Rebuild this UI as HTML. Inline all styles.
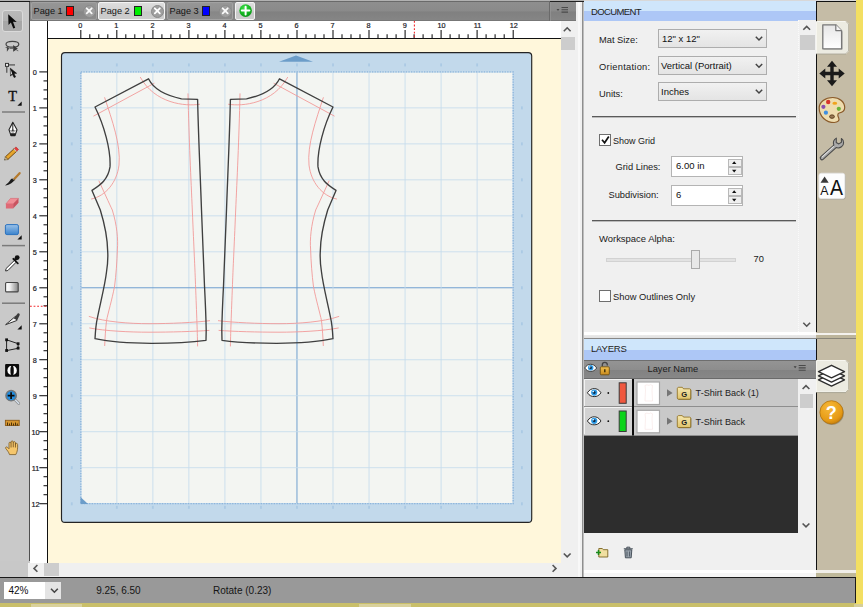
<!DOCTYPE html>
<html><head><meta charset="utf-8">
<style>
*{box-sizing:border-box;margin:0;padding:0}
html,body{width:863px;height:607px;overflow:hidden;background:#c8c8c8;font-family:"Liberation Sans",sans-serif;font-size:9px;color:#000}
.a{position:absolute}
#tool{left:0;top:2px;width:30px;height:559px;background:#c9c9c9;border-right:1px solid #505050}
#tabbar{left:30px;top:1px;width:546px;height:20px;background:linear-gradient(#8f8f8f,#8a8a8a 50%,#808080 55%,#858585);border-top:1px solid #6a6a6a;border-bottom:1px solid #777}
.tab{top:2px;height:18px;background:linear-gradient(#969696,#909090 50%,#878787 55%,#8c8c8c);border:1px solid #a2a2a2;border-radius:2px;font-size:9.2px;color:#151515;line-height:16.5px;padding-left:1.6px;white-space:nowrap}
.tab.act{background:linear-gradient(#dedede,#d2d2d2 50%,#c8c8c8 55%,#cdcdcd);border-color:#f4f4f4}
.sw{position:absolute;top:3px;width:8px;height:10px;border:1px solid #222}
.cl{position:absolute;top:2px;width:13px;height:13px;border-radius:50%;background:#9f9f9f;border:1px solid #8a8a8a}
#hr{left:30px;top:21px;width:531px;height:18px;background:#fff;border-bottom:1px solid #111}
#vr{left:30px;top:21px;width:18px;height:542px;background:#fff;border-right:1px solid #111}
#corner{left:30px;top:21px;width:17px;height:17px;background:#fff}
#canvas{left:48px;top:39px;width:513px;height:524px;background:#fff7db;overflow:hidden}
#vs{left:561px;top:21px;width:15px;height:542px;background:#f0f0f0}
#hs{left:28px;top:563px;width:533px;height:14px;background:#f0f0f0}
#sc{left:561px;top:563px;width:15px;height:14px;background:#f0f0f0}
.thumb{background:#cdcdcd}
#gap{left:576px;top:2px;width:8px;height:575px;background:linear-gradient(90deg,#f0f0f0 0,#f0f0f0 2px,#f8f8f8 2px,#f8f8f8 4px,#f0f0f0 4px,#f0f0f0 6px,#8e8e8e 6px,#8e8e8e 7.5px,#bdbdbd 7.5px)}
#status{left:0;top:577px;width:856px;height:26px;background:#999;border-top:1px solid #1a1a1a;border-right:1px solid #1a1a1a}
#bottom{left:0;top:603px;width:863px;height:4px;background:#c9bf6a}
#rp{left:584px;top:0;width:232px;height:577px;background:#f0f0f0}
.hdr{left:0;width:232px;height:20px;background:linear-gradient(#cfe6fb 50%,#adc7f6 50%);font-size:9.5px;line-height:21px;padding-left:7px;color:#222}
#strip{left:816px;top:2px;width:40px;height:575px;background:#c5bca6;border-left:1px solid #111}
#yellow{left:856px;top:0;width:7px;height:607px;background:#f3df62}
svg{position:absolute;left:0;top:0;overflow:visible}
svg text{font-family:"Liberation Sans",sans-serif}
</style></head><body>
<div class="a" id="tool"></div>
<div class="a" style="left:2px;top:10px;width:21px;height:22px;border:1px solid #dadada;border-radius:3px;background:linear-gradient(#b9b9b9,#b2b2b2 50%,#a6a6a6 52%,#a9a9a9)"></div>

<svg width="863" height="607" viewBox="0 0 863 607">
 <defs>
  <linearGradient id="rb" x1="0" y1="0" x2="0" y2="1"><stop offset="0" stop-color="#9cc2e8"/><stop offset="1" stop-color="#3a83cd"/></linearGradient>
  <linearGradient id="gr" x1="0" y1="0" x2="1" y2="0"><stop offset="0" stop-color="#ffffff"/><stop offset=".35" stop-color="#f0f0f0"/><stop offset="1" stop-color="#858585"/></linearGradient>
  <radialGradient id="zb" cx=".5" cy=".5" r=".6"><stop offset="0" stop-color="#2e9ff0"/><stop offset="1" stop-color="#1a7fd0"/></radialGradient>
 </defs>
 <!-- arrow -->
 <path d="M8.2 14.3 L8.5 25 L10.9 22.4 L13.3 28.6 L15.2 27.7 L13 21.8 L16.7 21.9 Z" fill="#0b0b0b"/>
 <!-- lasso -->
 <ellipse cx="12.4" cy="44.3" rx="6.4" ry="2.9" fill="none" stroke="#444" stroke-width="1.2"/>
 <path d="M6.9 46.2v5.6l2.3-3.3z" fill="#444"/>
 <path d="M13.2 45v6.8l4.6-3z" fill="#3a3a3a"/>
 <path d="M5.6 47.5h3M9.5 48.5h4M16.5 50.3l1.8 .5" stroke="#555" stroke-width=".8" fill="none"/>
 <!-- node select -->
 <rect x="5.5" y="63.4" width="3" height="3" fill="#e8e8e8" stroke="#333" stroke-width="1"/>
 <path d="M9 64.9h6" stroke="#666" stroke-width="1.5" fill="none"/>
 <path d="M6.8 67v5.8" stroke="#444" stroke-width="1.1" fill="none"/>
 <path d="M10.3 68.2l0.2 7.8 1.9-1.7 1.8 3.3 1.4-.7-1.7-3.3 2.7-.3z" fill="#111" stroke="#111" stroke-width=".6"/>
 <path d="M10.6 69.5l0.1 5.5 1.5-1.5z" fill="#ddd"/>
 <text x="12.65" y="100.6" font-size="14.3" text-anchor="middle" fill="#111" stroke="#111" stroke-width=".35" style="font-family:'Liberation Serif',serif">T</text>
 <!-- T triangle -->
 <path d="M21.7 101.5v4.3h-4.3z" fill="#111"/>
 <path d="M2 112h23" stroke="#7b7b7b" stroke-width="1.5"/>
 <!-- pen nib -->
 <path d="M12.8 122.3l-3.8 7.5 2 5.8h4l2-5.8z" fill="#fff" stroke="#222" stroke-width="1.1" stroke-linejoin="round"/>
 <path d="M10.6 133.2h4.6v2.6h-4.6z" fill="#222"/>
 <path d="M12.8 123v6.5" stroke="#222" stroke-width="1"/>
 <circle cx="12.8" cy="130.2" r="1" fill="#222"/>
 <path d="M9.6 130l2.2 2.8h2l2.2-2.8" fill="#555" opacity=".5"/>
 <!-- pencil -->
 <g transform="rotate(-43 12 153)">
  <rect x="4.5" y="151.3" width="12" height="3.6" fill="#e6a52c" stroke="#6e4510" stroke-width=".9"/>
  <path d="M4.5 151.3l-2.8 1.8 2.8 1.8z" fill="#e8cfa0" stroke="#5a4a2a" stroke-width=".5"/>
  <path d="M2.6 152.6l-1 .5 1 .5z" fill="#222"/>
  <rect x="16.5" y="151.3" width="2.6" height="3.6" fill="#e83a3a" stroke="#a22" stroke-width=".5"/>
  <rect x="15.7" y="151.3" width="1" height="3.6" fill="#ccc"/>
 </g>
 <!-- brush -->
 <path d="M19.6 173.2l-6 6.6" stroke="#b47a2e" stroke-width="2.3" stroke-linecap="round"/>
 <path d="M14.6 179.2c-1 3-4.5 5.5-9.6 6.3c2.5-1.8 4-3.5 6.2-6.7z" fill="#1b1b1b"/>
 <path d="M12.3 178.5l2.8 2.2" stroke="#777" stroke-width="1"/>
 <!-- eraser -->
 <path d="M10.5 198.4h8l-5.3 5.5h-7.3z" fill="#f08e96" stroke="#d9606c" stroke-width=".6"/>
 <path d="M5.9 203.9h7.3v4.6h-7.3z" fill="#de6a76"/>
 <path d="M13.2 203.9l5.3-5.5v4.3l-5.3 5.8z" fill="#c9525f"/>
 <!-- rect -->
 <rect x="5.4" y="224.6" width="13" height="10" rx="1.5" fill="url(#rb)" stroke="#2b72bf" stroke-width="1"/>
 <path d="M21.7 235.3v4.3h-4.3z" fill="#111"/>
 <path d="M2 245.6h23" stroke="#7b7b7b" stroke-width="1.5"/>
 <!-- eyedropper -->
 <path d="M6 268.6l8.4-8.2 1.8 1.8-8.3 8.3-2.3.5z" fill="#fff" stroke="#333" stroke-width="1"/>
 <path d="M13.3 258.8l4.5 4.5" stroke="#111" stroke-width="1.8" stroke-linecap="round"/>
 <circle cx="17.2" cy="257.6" r="2.4" fill="#111"/>
 <path d="M14.8 260l2.4-2.4" stroke="#111" stroke-width="2.6"/>
 <!-- gradient -->
 <rect x="5.6" y="282.5" width="12.6" height="9.4" rx="1" fill="url(#gr)" stroke="#444" stroke-width="1.1"/>
 <path d="M2 303.2h23" stroke="#7b7b7b" stroke-width="1.5"/>
 <!-- knife -->
 <path d="M5.6 324.7l10-8.5 1.2 4.3z" fill="#f4f4f4" stroke="#333" stroke-width="1" stroke-linejoin="round"/>
 <path d="M13.8 318.5l3.7-4.8c1-.9 2.5 0 2.2 1.3l-2.5 5.2z" fill="#3a3a3a"/>
 <path d="M21.7 325.3v4.3h-4.3z" fill="#111"/>
 <!-- distort -->
 <path d="M6.6 339.8l11.5 3.9v4.6l-11.5 2.3z" fill="none" stroke="#222" stroke-width="1"/>
 <g fill="#111"><rect x="5.2" y="338.4" width="2.8" height="2.8"/><rect x="16.7" y="342.3" width="2.8" height="2.8"/><rect x="16.7" y="346.8" width="2.8" height="2.8"/><rect x="5.2" y="349.1" width="2.8" height="2.8"/></g>
 <!-- bw -->
 <rect x="5.1" y="364" width="14" height="12.8" rx="1" fill="#0c0c0c"/>
 <ellipse cx="12.1" cy="370.4" rx="4.7" ry="4.9" fill="#fff"/>
 <ellipse cx="12.1" cy="370.4" rx="1.7" ry="5" fill="#0c0c0c"/>
 <path d="M10 364.5h4.2v1.6h-4.2zM10 374.7h4.2v1.6h-4.2z" fill="#0c0c0c"/>
 <!-- zoom -->
 <g transform="translate(-.5 0)">
 <path d="M15.3 399.5l4 4" stroke="#8a8a8a" stroke-width="2.6" stroke-linecap="round"/>
 <path d="M15.3 399.5l4 4" stroke="#d8e4f0" stroke-width="1.2" stroke-linecap="round"/>
 <circle cx="11.6" cy="395.7" r="5.2" fill="url(#zb)" stroke="#777" stroke-width="1.4"/>
 <path d="M11.6 392.3v6.8M8.2 395.7h6.8" stroke="#0a0a0a" stroke-width="1.7"/>
 </g>
 <!-- ruler -->
 <rect x="5.4" y="420.3" width="13.8" height="5.2" fill="#d5952f" stroke="#8c5a17" stroke-width=".9"/>
 <path d="M7.5 422.5v3M9.5 423.5v2M11.5 422.5v3M13.5 423.5v2M15.5 422.5v3M17.3 423.5v2" stroke="#3a2505" stroke-width=".9"/>
 <!-- hand -->
 <path d="M9.5 454.6C8.8 452 7 450.2 5.8 448.6C5 447.4 6.3 446.3 7.5 447.3L9 448.8L9 443.3C9 441.8 11 441.8 11 443.3L11.1 442C11.1 440.5 13.2 440.5 13.2 442L13.3 442.6C13.3 441.2 15.4 441.2 15.4 442.7L15.5 444.3C15.6 443 17.6 443 17.6 444.5C17.8 448 17.6 451.5 15.8 454.6Z" fill="#f5c66c" stroke="#7a5a24" stroke-width=".8" stroke-linejoin="round"/>
 <path d="M11.050 443.3V447.5M13.250 442.5V447.3M15.450 443.3V447.5" stroke="#6a4a1a" stroke-width=".8" fill="none"/>
</svg>
<div class="a" id="tabbar"></div>
<div class="a tab" style="left:31px;width:66px">Page 1<span class="sw" style="left:34px;background:#f00"></span><span class="cl" style="left:51px"></span></div>
<div class="a tab act" style="left:98px;width:67px">Page 2<span class="sw" style="left:35px;background:#0e0"></span><span class="cl" style="left:52px"></span></div>
<div class="a tab" style="left:167px;width:66px">Page 3<span class="sw" style="left:34px;background:#00f"></span><span class="cl" style="left:51px"></span></div>
<div class="a tab act" style="left:235px;width:20px"></div>
<svg width="863" height="607" viewBox="0 0 863 607">
 <g stroke="#fff" stroke-width="1.8" stroke-linecap="round">
  <path d="M86.7 8.3l5 5m0-5l-5 5" opacity=".95"/>
  <path d="M154.8 8.3l5 5m0-5l-5 5"/>
  <path d="M222.7 8.3l5 5m0-5l-5 5" opacity=".95"/>
 </g>
 <defs><radialGradient id="gg" cx=".4" cy=".3" r=".8"><stop offset="0" stop-color="#3fe04a"/><stop offset=".6" stop-color="#12b31f"/><stop offset="1" stop-color="#0a8a15"/></radialGradient></defs>
 <circle cx="245.6" cy="10.6" r="6.3" fill="url(#gg)"/>
 <path d="M245.6 6.8v7.6M241.8 10.6h7.6" stroke="#fff" stroke-width="2" stroke-linecap="round"/>
 <!-- menu button -->
 <line x1="549.5" y1="1" x2="549.5" y2="21" stroke="#6a6a6a"/>
 <line x1="550.5" y1="1" x2="550.5" y2="21" stroke="#999" opacity=".6"/>
 <path d="M556.5 9h3l-1.5 2z" fill="#4a4a4a"/>
 <path d="M561.5 7.5h6.5M561.5 9.8h6.5M561.5 12.1h6.5" stroke="#4a4a4a" stroke-width="1.1"/>
 <line x1="550" y1="1.5" x2="584" y2="1.5" stroke="#222" stroke-width="1"/>
</svg>
<div class="a" id="hr"></div><div class="a" id="vr"></div><div class="a" id="corner"></div>
<svg width="863" height="607" viewBox="0 0 863 607">
<line x1="80.8" y1="30" x2="80.8" y2="38" stroke="#1a1a1a" stroke-width="1.1"/>
<text x="80.4" y="28.2" font-size="7.3" text-anchor="middle" fill="#1c1c28" stroke="#1c1c28" stroke-width=".2">0</text>
<line x1="89.8" y1="34.3" x2="89.8" y2="38" stroke="#1a1a1a" stroke-width="1.1"/>
<line x1="98.8" y1="34.3" x2="98.8" y2="38" stroke="#1a1a1a" stroke-width="1.1"/>
<line x1="107.8" y1="34.3" x2="107.8" y2="38" stroke="#1a1a1a" stroke-width="1.1"/>
<line x1="116.8" y1="30" x2="116.8" y2="38" stroke="#1a1a1a" stroke-width="1.1"/>
<text x="116.4" y="28.2" font-size="7.3" text-anchor="middle" fill="#1c1c28" stroke="#1c1c28" stroke-width=".2">1</text>
<line x1="125.8" y1="34.3" x2="125.8" y2="38" stroke="#1a1a1a" stroke-width="1.1"/>
<line x1="134.8" y1="34.3" x2="134.8" y2="38" stroke="#1a1a1a" stroke-width="1.1"/>
<line x1="143.9" y1="34.3" x2="143.9" y2="38" stroke="#1a1a1a" stroke-width="1.1"/>
<line x1="152.9" y1="30" x2="152.9" y2="38" stroke="#1a1a1a" stroke-width="1.1"/>
<text x="152.5" y="28.2" font-size="7.3" text-anchor="middle" fill="#1c1c28" stroke="#1c1c28" stroke-width=".2">2</text>
<line x1="161.9" y1="34.3" x2="161.9" y2="38" stroke="#1a1a1a" stroke-width="1.1"/>
<line x1="170.9" y1="34.3" x2="170.9" y2="38" stroke="#1a1a1a" stroke-width="1.1"/>
<line x1="179.9" y1="34.3" x2="179.9" y2="38" stroke="#1a1a1a" stroke-width="1.1"/>
<line x1="188.9" y1="30" x2="188.9" y2="38" stroke="#1a1a1a" stroke-width="1.1"/>
<text x="188.5" y="28.2" font-size="7.3" text-anchor="middle" fill="#1c1c28" stroke="#1c1c28" stroke-width=".2">3</text>
<line x1="197.9" y1="34.3" x2="197.9" y2="38" stroke="#1a1a1a" stroke-width="1.1"/>
<line x1="206.9" y1="34.3" x2="206.9" y2="38" stroke="#1a1a1a" stroke-width="1.1"/>
<line x1="215.9" y1="34.3" x2="215.9" y2="38" stroke="#1a1a1a" stroke-width="1.1"/>
<line x1="224.9" y1="30" x2="224.9" y2="38" stroke="#1a1a1a" stroke-width="1.1"/>
<text x="224.5" y="28.2" font-size="7.3" text-anchor="middle" fill="#1c1c28" stroke="#1c1c28" stroke-width=".2">4</text>
<line x1="233.9" y1="34.3" x2="233.9" y2="38" stroke="#1a1a1a" stroke-width="1.1"/>
<line x1="242.9" y1="34.3" x2="242.9" y2="38" stroke="#1a1a1a" stroke-width="1.1"/>
<line x1="251.9" y1="34.3" x2="251.9" y2="38" stroke="#1a1a1a" stroke-width="1.1"/>
<line x1="260.9" y1="30" x2="260.9" y2="38" stroke="#1a1a1a" stroke-width="1.1"/>
<text x="260.6" y="28.2" font-size="7.3" text-anchor="middle" fill="#1c1c28" stroke="#1c1c28" stroke-width=".2">5</text>
<line x1="270.0" y1="34.3" x2="270.0" y2="38" stroke="#1a1a1a" stroke-width="1.1"/>
<line x1="279.0" y1="34.3" x2="279.0" y2="38" stroke="#1a1a1a" stroke-width="1.1"/>
<line x1="288.0" y1="34.3" x2="288.0" y2="38" stroke="#1a1a1a" stroke-width="1.1"/>
<line x1="297.0" y1="30" x2="297.0" y2="38" stroke="#1a1a1a" stroke-width="1.1"/>
<text x="296.6" y="28.2" font-size="7.3" text-anchor="middle" fill="#1c1c28" stroke="#1c1c28" stroke-width=".2">6</text>
<line x1="306.0" y1="34.3" x2="306.0" y2="38" stroke="#1a1a1a" stroke-width="1.1"/>
<line x1="315.0" y1="34.3" x2="315.0" y2="38" stroke="#1a1a1a" stroke-width="1.1"/>
<line x1="324.0" y1="34.3" x2="324.0" y2="38" stroke="#1a1a1a" stroke-width="1.1"/>
<line x1="333.0" y1="30" x2="333.0" y2="38" stroke="#1a1a1a" stroke-width="1.1"/>
<text x="332.6" y="28.2" font-size="7.3" text-anchor="middle" fill="#1c1c28" stroke="#1c1c28" stroke-width=".2">7</text>
<line x1="342.0" y1="34.3" x2="342.0" y2="38" stroke="#1a1a1a" stroke-width="1.1"/>
<line x1="351.0" y1="34.3" x2="351.0" y2="38" stroke="#1a1a1a" stroke-width="1.1"/>
<line x1="360.0" y1="34.3" x2="360.0" y2="38" stroke="#1a1a1a" stroke-width="1.1"/>
<line x1="369.0" y1="30" x2="369.0" y2="38" stroke="#1a1a1a" stroke-width="1.1"/>
<text x="368.6" y="28.2" font-size="7.3" text-anchor="middle" fill="#1c1c28" stroke="#1c1c28" stroke-width=".2">8</text>
<line x1="378.0" y1="34.3" x2="378.0" y2="38" stroke="#1a1a1a" stroke-width="1.1"/>
<line x1="387.1" y1="34.3" x2="387.1" y2="38" stroke="#1a1a1a" stroke-width="1.1"/>
<line x1="396.1" y1="34.3" x2="396.1" y2="38" stroke="#1a1a1a" stroke-width="1.1"/>
<line x1="405.1" y1="30" x2="405.1" y2="38" stroke="#1a1a1a" stroke-width="1.1"/>
<text x="404.7" y="28.2" font-size="7.3" text-anchor="middle" fill="#1c1c28" stroke="#1c1c28" stroke-width=".2">9</text>
<line x1="414.1" y1="34.3" x2="414.1" y2="38" stroke="#1a1a1a" stroke-width="1.1"/>
<line x1="423.1" y1="34.3" x2="423.1" y2="38" stroke="#1a1a1a" stroke-width="1.1"/>
<line x1="432.1" y1="34.3" x2="432.1" y2="38" stroke="#1a1a1a" stroke-width="1.1"/>
<line x1="441.1" y1="30" x2="441.1" y2="38" stroke="#1a1a1a" stroke-width="1.1"/>
<text x="441.6" y="28.2" font-size="7.3" text-anchor="middle" fill="#1c1c28" stroke="#1c1c28" stroke-width=".2">10</text>
<line x1="450.1" y1="34.3" x2="450.1" y2="38" stroke="#1a1a1a" stroke-width="1.1"/>
<line x1="459.1" y1="34.3" x2="459.1" y2="38" stroke="#1a1a1a" stroke-width="1.1"/>
<line x1="468.1" y1="34.3" x2="468.1" y2="38" stroke="#1a1a1a" stroke-width="1.1"/>
<line x1="477.1" y1="30" x2="477.1" y2="38" stroke="#1a1a1a" stroke-width="1.1"/>
<text x="477.6" y="28.2" font-size="7.3" text-anchor="middle" fill="#1c1c28" stroke="#1c1c28" stroke-width=".2">11</text>
<line x1="486.1" y1="34.3" x2="486.1" y2="38" stroke="#1a1a1a" stroke-width="1.1"/>
<line x1="495.1" y1="34.3" x2="495.1" y2="38" stroke="#1a1a1a" stroke-width="1.1"/>
<line x1="504.2" y1="34.3" x2="504.2" y2="38" stroke="#1a1a1a" stroke-width="1.1"/>
<line x1="513.2" y1="30" x2="513.2" y2="38" stroke="#1a1a1a" stroke-width="1.1"/>
<text x="513.7" y="28.2" font-size="7.3" text-anchor="middle" fill="#1c1c28" stroke="#1c1c28" stroke-width=".2">12</text>
<line x1="39.3" y1="71.9" x2="47" y2="71.9" stroke="#1a1a1a" stroke-width="1.1"/>
<text x="34.9" y="74.8" font-size="7.3" text-anchor="middle" fill="#1c1c28" stroke="#1c1c28" stroke-width=".2">0</text>
<line x1="43.5" y1="80.9" x2="47" y2="80.9" stroke="#1a1a1a" stroke-width="1.1"/>
<line x1="43.5" y1="89.9" x2="47" y2="89.9" stroke="#1a1a1a" stroke-width="1.1"/>
<line x1="43.5" y1="98.9" x2="47" y2="98.9" stroke="#1a1a1a" stroke-width="1.1"/>
<line x1="39.3" y1="107.9" x2="47" y2="107.9" stroke="#1a1a1a" stroke-width="1.1"/>
<text x="34.9" y="110.8" font-size="7.3" text-anchor="middle" fill="#1c1c28" stroke="#1c1c28" stroke-width=".2">1</text>
<line x1="43.5" y1="116.9" x2="47" y2="116.9" stroke="#1a1a1a" stroke-width="1.1"/>
<line x1="43.5" y1="125.9" x2="47" y2="125.9" stroke="#1a1a1a" stroke-width="1.1"/>
<line x1="43.5" y1="134.9" x2="47" y2="134.9" stroke="#1a1a1a" stroke-width="1.1"/>
<line x1="39.3" y1="143.9" x2="47" y2="143.9" stroke="#1a1a1a" stroke-width="1.1"/>
<text x="34.9" y="146.8" font-size="7.3" text-anchor="middle" fill="#1c1c28" stroke="#1c1c28" stroke-width=".2">2</text>
<line x1="43.5" y1="152.9" x2="47" y2="152.9" stroke="#1a1a1a" stroke-width="1.1"/>
<line x1="43.5" y1="161.8" x2="47" y2="161.8" stroke="#1a1a1a" stroke-width="1.1"/>
<line x1="43.5" y1="170.8" x2="47" y2="170.8" stroke="#1a1a1a" stroke-width="1.1"/>
<line x1="39.3" y1="179.8" x2="47" y2="179.8" stroke="#1a1a1a" stroke-width="1.1"/>
<text x="34.9" y="182.7" font-size="7.3" text-anchor="middle" fill="#1c1c28" stroke="#1c1c28" stroke-width=".2">3</text>
<line x1="43.5" y1="188.8" x2="47" y2="188.8" stroke="#1a1a1a" stroke-width="1.1"/>
<line x1="43.5" y1="197.8" x2="47" y2="197.8" stroke="#1a1a1a" stroke-width="1.1"/>
<line x1="43.5" y1="206.8" x2="47" y2="206.8" stroke="#1a1a1a" stroke-width="1.1"/>
<line x1="39.3" y1="215.8" x2="47" y2="215.8" stroke="#1a1a1a" stroke-width="1.1"/>
<text x="34.9" y="218.7" font-size="7.3" text-anchor="middle" fill="#1c1c28" stroke="#1c1c28" stroke-width=".2">4</text>
<line x1="43.5" y1="224.8" x2="47" y2="224.8" stroke="#1a1a1a" stroke-width="1.1"/>
<line x1="43.5" y1="233.8" x2="47" y2="233.8" stroke="#1a1a1a" stroke-width="1.1"/>
<line x1="43.5" y1="242.8" x2="47" y2="242.8" stroke="#1a1a1a" stroke-width="1.1"/>
<line x1="39.3" y1="251.8" x2="47" y2="251.8" stroke="#1a1a1a" stroke-width="1.1"/>
<text x="34.9" y="254.7" font-size="7.3" text-anchor="middle" fill="#1c1c28" stroke="#1c1c28" stroke-width=".2">5</text>
<line x1="43.5" y1="260.8" x2="47" y2="260.8" stroke="#1a1a1a" stroke-width="1.1"/>
<line x1="43.5" y1="269.8" x2="47" y2="269.8" stroke="#1a1a1a" stroke-width="1.1"/>
<line x1="43.5" y1="278.8" x2="47" y2="278.8" stroke="#1a1a1a" stroke-width="1.1"/>
<line x1="39.3" y1="287.8" x2="47" y2="287.8" stroke="#1a1a1a" stroke-width="1.1"/>
<text x="34.9" y="290.7" font-size="7.3" text-anchor="middle" fill="#1c1c28" stroke="#1c1c28" stroke-width=".2">6</text>
<line x1="43.5" y1="296.8" x2="47" y2="296.8" stroke="#1a1a1a" stroke-width="1.1"/>
<line x1="43.5" y1="305.8" x2="47" y2="305.8" stroke="#1a1a1a" stroke-width="1.1"/>
<line x1="43.5" y1="314.8" x2="47" y2="314.8" stroke="#1a1a1a" stroke-width="1.1"/>
<line x1="39.3" y1="323.8" x2="47" y2="323.8" stroke="#1a1a1a" stroke-width="1.1"/>
<text x="34.9" y="326.7" font-size="7.3" text-anchor="middle" fill="#1c1c28" stroke="#1c1c28" stroke-width=".2">7</text>
<line x1="43.5" y1="332.8" x2="47" y2="332.8" stroke="#1a1a1a" stroke-width="1.1"/>
<line x1="43.5" y1="341.8" x2="47" y2="341.8" stroke="#1a1a1a" stroke-width="1.1"/>
<line x1="43.5" y1="350.7" x2="47" y2="350.7" stroke="#1a1a1a" stroke-width="1.1"/>
<line x1="39.3" y1="359.7" x2="47" y2="359.7" stroke="#1a1a1a" stroke-width="1.1"/>
<text x="34.9" y="362.6" font-size="7.3" text-anchor="middle" fill="#1c1c28" stroke="#1c1c28" stroke-width=".2">8</text>
<line x1="43.5" y1="368.7" x2="47" y2="368.7" stroke="#1a1a1a" stroke-width="1.1"/>
<line x1="43.5" y1="377.7" x2="47" y2="377.7" stroke="#1a1a1a" stroke-width="1.1"/>
<line x1="43.5" y1="386.7" x2="47" y2="386.7" stroke="#1a1a1a" stroke-width="1.1"/>
<line x1="39.3" y1="395.7" x2="47" y2="395.7" stroke="#1a1a1a" stroke-width="1.1"/>
<text x="34.9" y="398.6" font-size="7.3" text-anchor="middle" fill="#1c1c28" stroke="#1c1c28" stroke-width=".2">9</text>
<line x1="43.5" y1="404.7" x2="47" y2="404.7" stroke="#1a1a1a" stroke-width="1.1"/>
<line x1="43.5" y1="413.7" x2="47" y2="413.7" stroke="#1a1a1a" stroke-width="1.1"/>
<line x1="43.5" y1="422.7" x2="47" y2="422.7" stroke="#1a1a1a" stroke-width="1.1"/>
<line x1="39.3" y1="431.7" x2="47" y2="431.7" stroke="#1a1a1a" stroke-width="1.1"/>
<text x="35.6" y="434.6" font-size="7.3" text-anchor="middle" fill="#1c1c28" stroke="#1c1c28" stroke-width=".2">10</text>
<line x1="43.5" y1="440.7" x2="47" y2="440.7" stroke="#1a1a1a" stroke-width="1.1"/>
<line x1="43.5" y1="449.7" x2="47" y2="449.7" stroke="#1a1a1a" stroke-width="1.1"/>
<line x1="43.5" y1="458.7" x2="47" y2="458.7" stroke="#1a1a1a" stroke-width="1.1"/>
<line x1="39.3" y1="467.7" x2="47" y2="467.7" stroke="#1a1a1a" stroke-width="1.1"/>
<text x="35.6" y="470.6" font-size="7.3" text-anchor="middle" fill="#1c1c28" stroke="#1c1c28" stroke-width=".2">11</text>
<line x1="43.5" y1="476.7" x2="47" y2="476.7" stroke="#1a1a1a" stroke-width="1.1"/>
<line x1="43.5" y1="485.7" x2="47" y2="485.7" stroke="#1a1a1a" stroke-width="1.1"/>
<line x1="43.5" y1="494.7" x2="47" y2="494.7" stroke="#1a1a1a" stroke-width="1.1"/>
<line x1="39.3" y1="503.7" x2="47" y2="503.7" stroke="#1a1a1a" stroke-width="1.1"/>
<text x="35.6" y="506.6" font-size="7.3" text-anchor="middle" fill="#1c1c28" stroke="#1c1c28" stroke-width=".2">12</text>
<line x1="414.4" y1="21" x2="414.4" y2="38" stroke="#f2282c" stroke-width="1.1" stroke-dasharray="1.8 1.8"/>
<line x1="30" y1="306.2" x2="47" y2="306.2" stroke="#f2282c" stroke-width="1.1" stroke-dasharray="1.8 1.8"/>
</svg>
<div class="a" id="canvas"></div>
<svg width="863" height="607" viewBox="0 0 863 607" style="clip-path:inset(39px 302px 44px 48px)">
<rect x="61.5" y="52.6" width="470.2" height="469.8" rx="3.5" ry="3.5" fill="#c2d9eb" stroke="#242424" stroke-width="1.15"/>
<rect x="80.3" y="71.4" width="433.2" height="432.6" fill="#f3f5f2"/>
<line x1="116.83" y1="71.5" x2="116.83" y2="504" stroke="#c5dbec" stroke-width="0.85"/>
<line x1="80.5" y1="107.88" x2="513.4" y2="107.88" stroke="#c5dbec" stroke-width="0.85"/>
<line x1="152.86" y1="71.5" x2="152.86" y2="504" stroke="#c5dbec" stroke-width="0.85"/>
<line x1="80.5" y1="143.86" x2="513.4" y2="143.86" stroke="#c5dbec" stroke-width="0.85"/>
<line x1="188.89" y1="71.5" x2="188.89" y2="504" stroke="#c5dbec" stroke-width="0.85"/>
<line x1="80.5" y1="179.84" x2="513.4" y2="179.84" stroke="#c5dbec" stroke-width="0.85"/>
<line x1="224.92" y1="71.5" x2="224.92" y2="504" stroke="#c5dbec" stroke-width="0.85"/>
<line x1="80.5" y1="215.82" x2="513.4" y2="215.82" stroke="#c5dbec" stroke-width="0.85"/>
<line x1="260.95" y1="71.5" x2="260.95" y2="504" stroke="#c5dbec" stroke-width="0.85"/>
<line x1="80.5" y1="251.8" x2="513.4" y2="251.8" stroke="#c5dbec" stroke-width="0.85"/>
<line x1="296.98" y1="71.5" x2="296.98" y2="504" stroke="#6f9fcf" stroke-width="1.0"/>
<line x1="80.5" y1="287.78" x2="513.4" y2="287.78" stroke="#6f9fcf" stroke-width="1.0"/>
<line x1="333.01" y1="71.5" x2="333.01" y2="504" stroke="#c5dbec" stroke-width="0.85"/>
<line x1="80.5" y1="323.76" x2="513.4" y2="323.76" stroke="#c5dbec" stroke-width="0.85"/>
<line x1="369.04" y1="71.5" x2="369.04" y2="504" stroke="#c5dbec" stroke-width="0.85"/>
<line x1="80.5" y1="359.74" x2="513.4" y2="359.74" stroke="#c5dbec" stroke-width="0.85"/>
<line x1="405.07" y1="71.5" x2="405.07" y2="504" stroke="#c5dbec" stroke-width="0.85"/>
<line x1="80.5" y1="395.72" x2="513.4" y2="395.72" stroke="#c5dbec" stroke-width="0.85"/>
<line x1="441.1" y1="71.5" x2="441.1" y2="504" stroke="#c5dbec" stroke-width="0.85"/>
<line x1="80.5" y1="431.7" x2="513.4" y2="431.7" stroke="#c5dbec" stroke-width="0.85"/>
<line x1="477.13" y1="71.5" x2="477.13" y2="504" stroke="#c5dbec" stroke-width="0.85"/>
<line x1="80.5" y1="467.68" x2="513.4" y2="467.68" stroke="#c5dbec" stroke-width="0.85"/>
<rect x="80.8" y="71.9" width="432.4" height="431.8" fill="none" stroke="#b9d3ea" stroke-width="1.3"/>
<rect x="80.8" y="71.9" width="432.4" height="431.8" fill="none" stroke="#8db5db" stroke-width="1.3" stroke-dasharray="1.3 1.3"/>
<path d="M279 61.8 L296 55.5 L313 61.8 Z" fill="#6c9dc9"/>
<path d="M80.5 497 L80.5 504 L88 504 Z" fill="#6c9dc9"/>
<rect x="115.92999999999999" y="63.4" width="1.8" height="3" fill="#8db5db" opacity=".42"/>
<rect x="115.92999999999999" y="505.8" width="1.8" height="3" fill="#8db5db" opacity=".42"/>
<rect x="70.9" y="106.38" width="1.8" height="3" fill="#8db5db" opacity=".42"/>
<rect x="521" y="106.38" width="1.8" height="3" fill="#8db5db" opacity=".42"/>
<rect x="151.96" y="63.4" width="1.8" height="3" fill="#8db5db" opacity=".42"/>
<rect x="151.96" y="505.8" width="1.8" height="3" fill="#8db5db" opacity=".42"/>
<rect x="70.9" y="142.36" width="1.8" height="3" fill="#8db5db" opacity=".42"/>
<rect x="521" y="142.36" width="1.8" height="3" fill="#8db5db" opacity=".42"/>
<rect x="187.98999999999998" y="63.4" width="1.8" height="3" fill="#8db5db" opacity=".42"/>
<rect x="187.98999999999998" y="505.8" width="1.8" height="3" fill="#8db5db" opacity=".42"/>
<rect x="70.9" y="178.34" width="1.8" height="3" fill="#8db5db" opacity=".42"/>
<rect x="521" y="178.34" width="1.8" height="3" fill="#8db5db" opacity=".42"/>
<rect x="224.01999999999998" y="63.4" width="1.8" height="3" fill="#8db5db" opacity=".42"/>
<rect x="224.01999999999998" y="505.8" width="1.8" height="3" fill="#8db5db" opacity=".42"/>
<rect x="70.9" y="214.32" width="1.8" height="3" fill="#8db5db" opacity=".42"/>
<rect x="521" y="214.32" width="1.8" height="3" fill="#8db5db" opacity=".42"/>
<rect x="260.05" y="63.4" width="1.8" height="3" fill="#8db5db" opacity=".42"/>
<rect x="260.05" y="505.8" width="1.8" height="3" fill="#8db5db" opacity=".42"/>
<rect x="70.9" y="250.3" width="1.8" height="3" fill="#8db5db" opacity=".42"/>
<rect x="521" y="250.3" width="1.8" height="3" fill="#8db5db" opacity=".42"/>
<rect x="296.08000000000004" y="63.4" width="1.8" height="3" fill="#8db5db" opacity=".42"/>
<rect x="296.08000000000004" y="505.8" width="1.8" height="3" fill="#8db5db" opacity=".42"/>
<rect x="70.9" y="286.28" width="1.8" height="3" fill="#8db5db" opacity=".42"/>
<rect x="521" y="286.28" width="1.8" height="3" fill="#8db5db" opacity=".42"/>
<rect x="332.11" y="63.4" width="1.8" height="3" fill="#8db5db" opacity=".42"/>
<rect x="332.11" y="505.8" width="1.8" height="3" fill="#8db5db" opacity=".42"/>
<rect x="70.9" y="322.26" width="1.8" height="3" fill="#8db5db" opacity=".42"/>
<rect x="521" y="322.26" width="1.8" height="3" fill="#8db5db" opacity=".42"/>
<rect x="368.14000000000004" y="63.4" width="1.8" height="3" fill="#8db5db" opacity=".42"/>
<rect x="368.14000000000004" y="505.8" width="1.8" height="3" fill="#8db5db" opacity=".42"/>
<rect x="70.9" y="358.24" width="1.8" height="3" fill="#8db5db" opacity=".42"/>
<rect x="521" y="358.24" width="1.8" height="3" fill="#8db5db" opacity=".42"/>
<rect x="404.17" y="63.4" width="1.8" height="3" fill="#8db5db" opacity=".42"/>
<rect x="404.17" y="505.8" width="1.8" height="3" fill="#8db5db" opacity=".42"/>
<rect x="70.9" y="394.22" width="1.8" height="3" fill="#8db5db" opacity=".42"/>
<rect x="521" y="394.22" width="1.8" height="3" fill="#8db5db" opacity=".42"/>
<rect x="440.20000000000005" y="63.4" width="1.8" height="3" fill="#8db5db" opacity=".42"/>
<rect x="440.20000000000005" y="505.8" width="1.8" height="3" fill="#8db5db" opacity=".42"/>
<rect x="70.9" y="430.2" width="1.8" height="3" fill="#8db5db" opacity=".42"/>
<rect x="521" y="430.2" width="1.8" height="3" fill="#8db5db" opacity=".42"/>
<rect x="476.23" y="63.4" width="1.8" height="3" fill="#8db5db" opacity=".42"/>
<rect x="476.23" y="505.8" width="1.8" height="3" fill="#8db5db" opacity=".42"/>
<rect x="70.9" y="466.18" width="1.8" height="3" fill="#8db5db" opacity=".42"/>
<rect x="521" y="466.18" width="1.8" height="3" fill="#8db5db" opacity=".42"/>
<rect x="521" y="502.3" width="1.8" height="3" fill="#8db5db" opacity=".42"/><rect x="70.9" y="502.3" width="1.8" height="3" fill="#8db5db" opacity=".42"/>

<g fill="none" stroke-linecap="round" stroke-linejoin="round">
 <g stroke="#f29a98" stroke-width="0.9">
  <path d="M93.8 116 L154 83.4"/>
  <path d="M140.4 77.4 C155 103.6 185 106.5 199.5 104.3"/>
  <path d="M188 93.8 C189 140 191 180 192.3 210 C194 250 195 270 195.3 279 C196.5 310 197.3 330 197.6 346"/>
  <path d="M104.7 97.7 C112 120 121 145 119 165 C117 182 106 196 91.5 199"/>
  <path d="M99 181 C104 192 109 203 112.3 210 C117 225 118.2 240 117.4 249 C117 262 116 275 114.6 286 C112 300 108 313 106.5 320.7 C105.5 330 105 338 104.7 345.6"/>
  <path d="M89.2 316.5 C105 322 130 323.7 149 323.7 C170 323.7 195 322.5 209.6 320.7"/>
  <path d="M89.7 328 C105 331 130 332.2 149 332.2 C170 332.2 195 331.5 209 330.4"/>
 </g>
 <path stroke="#3f3f3f" stroke-width="1.35" d="M95 107 L148.5 78.8 C154 90 168 96 181.5 98.8 L197.6 99.3 C198.5 140 200.5 180 201.5 210 C203 250 204 270 204.5 286 C205.5 305 206 320 206.2 330 L206 340.3 C190 342.5 170 343.3 151.5 343.3 C130 343.3 110 342 95 338.7 C95.5 330 96 324 97.3 318.4 C101 300 105 285 106.5 272 C108 262 108 256 107.7 251.5 C107.5 238 104 222 100.3 210 L92 190.4 C100 185 108 180 110 166.9 C111 150 104 125 95 107 Z"/>
</g>
<g transform="translate(428 0) scale(-1 1)">
<g fill="none" stroke-linecap="round" stroke-linejoin="round">
 <g stroke="#f29a98" stroke-width="0.9">
  <path d="M93.8 116 L154 83.4"/>
  <path d="M140.4 77.4 C155 103.6 185 106.5 199.5 104.3"/>
  <path d="M188 93.8 C189 140 191 180 192.3 210 C194 250 195 270 195.3 279 C196.5 310 197.3 330 197.6 346"/>
  <path d="M104.7 97.7 C112 120 121 145 119 165 C117 182 106 196 91.5 199"/>
  <path d="M99 181 C104 192 109 203 112.3 210 C117 225 118.2 240 117.4 249 C117 262 116 275 114.6 286 C112 300 108 313 106.5 320.7 C105.5 330 105 338 104.7 345.6"/>
  <path d="M89.2 316.5 C105 322 130 323.7 149 323.7 C170 323.7 195 322.5 209.6 320.7"/>
  <path d="M89.7 328 C105 331 130 332.2 149 332.2 C170 332.2 195 331.5 209 330.4"/>
 </g>
 <path stroke="#3f3f3f" stroke-width="1.35" d="M95 107 L148.5 78.8 C154 90 168 96 181.5 98.8 L197.6 99.3 C198.5 140 200.5 180 201.5 210 C203 250 204 270 204.5 286 C205.5 305 206 320 206.2 330 L206 340.3 C190 342.5 170 343.3 151.5 343.3 C130 343.3 110 342 95 338.7 C95.5 330 96 324 97.3 318.4 C101 300 105 285 106.5 272 C108 262 108 256 107.7 251.5 C107.5 238 104 222 100.3 210 L92 190.4 C100 185 108 180 110 166.9 C111 150 104 125 95 107 Z"/>
</g></g>
</svg>
<div class="a" id="vs"></div>
<div class="a" id="hs"></div>
<div class="a" id="sc"></div>
<div class="a thumb" style="left:561px;top:37px;width:14px;height:13px"></div>
<div class="a thumb" style="left:43.5px;top:563px;width:15px;height:12.6px"></div>
<div class="a" id="gap"></div>
<svg width="863" height="607" viewBox="0 0 863 607">
 <g fill="none" stroke="#555" stroke-width="1.6">
  <path d="M563.8 31.2l3.4-3.4 3.4 3.4"/>
  <path d="M563.8 553.5l3.4 3.4 3.4-3.4"/>
  <path d="M37.4 565l-3.4 3.4 3.4 3.4"/>
  <path d="M552.6 565l3.4 3.4-3.4 3.4"/>
 </g>
</svg>
<style>
#rp .l{position:absolute;font-size:9.3px;line-height:11px;white-space:nowrap;color:#1a1a1a}
#rp .dd{position:absolute;left:74px;width:109px;height:19px;border:1px solid #adadad;background:linear-gradient(#f1f1f1,#e4e4e4);font-size:9.5px;line-height:17px;padding-left:3px;color:#111;white-space:nowrap}
#rp .sp{position:absolute;left:87px;width:72px;height:21px;border:1px solid #b4b4b4;background:#fff;font-size:9.5px;line-height:18px;padding-left:4px;color:#111}
#rp .sb{position:absolute;left:56px;width:14px;height:8px;border:1px solid #b9b9b9;background:#efefef}
#rp .cb{position:absolute;left:15px;width:12px;height:12px;border:1px solid #6e6e6e;background:#fff}
#rp .sep{position:absolute;left:8px;width:204px;height:2px;background:#5a5a5a;border-bottom:1px solid #bbb}
.lrow{position:absolute;left:0;width:214px;height:28px;background:#c9c9c9;border-bottom:1px solid #8e8e8e}
</style>
<div class="a" id="rp">
 <div class="a hdr" style="top:1px;height:19.5px;letter-spacing:-.62px">DOCUMENT</div>
 <div class="l" style="left:15px;top:34.5px">Mat Size:</div>
 <div class="l" style="left:15px;top:62px;letter-spacing:.28px">Orientation:</div>
 <div class="l" style="left:15px;top:88.5px">Units:</div>
 <div class="dd" style="top:29px">12" x 12"</div>
 <div class="dd" style="top:56px;padding-left:2px">Vertical (Portrait)</div>
 <div class="dd" style="top:82px;padding-left:2px">Inches</div>
 <div class="sep" style="top:116px"></div>
 <div class="cb" style="top:134px"></div>
 <div class="l" style="left:29px;top:135.5px;font-size:9px">Show Grid</div>
 <div class="l" style="left:31.5px;top:162px">Grid Lines:</div>
 <div class="l" style="left:24.5px;top:190px">Subdivision:</div>
 <div class="sp" style="top:156px">6.00 in<span class="sb" style="top:2px"></span><span class="sb" style="top:10px"></span></div>
 <div class="sp" style="top:185px">6<span class="sb" style="top:2px"></span><span class="sb" style="top:10px"></span></div>
 <div class="sep" style="top:219.5px"></div>
 <div class="l" style="left:15px;top:233px;font-size:9.45px">Workspace Alpha:</div>
 <div class="a" style="left:22px;top:258px;width:130px;height:4px;background:#e2e2e2;border:1px solid #d2d2d2"></div>
 <div class="a" style="left:107px;top:250px;width:9px;height:19px;background:#e8e8e8;border:1px solid #aaa"></div>
 <div class="l" style="left:169.5px;top:254px">70</div>
 <div class="cb" style="top:290px"></div>
 <div class="l" style="left:29px;top:291.5px;font-size:9.35px">Show Outlines Only</div>
 <!-- doc scrollbar -->
 <div class="a" style="left:214px;top:20px;width:18px;height:312px;background:#f0f0f0;border-left:1px dotted #fafafa"></div>
 <div class="a thumb" style="left:216px;top:35px;width:14.5px;height:14.5px"></div>
 <!-- divider -->
 <div class="a" style="left:0;top:332px;width:232px;height:7px;background:linear-gradient(#fff 0,#fff 2.5px,#eaeaea 3px,#e0e0e0 6px,#888 6px)"></div>
 <div class="a hdr" style="top:339px;height:21px;letter-spacing:-.2px;line-height:20px">LAYERS</div>
 <div class="a" style="left:0;top:360px;width:232px;height:19px;background:linear-gradient(#949494,#8d8d8d 50%,#828282 55%,#878787);border-bottom:1px solid #6a6a6a;font-size:9.3px;line-height:16.5px;color:#1c1c1c;padding-left:63.5px;border-top:1px solid #6e6e6e">Layer Name</div>
 <div class="a" style="left:0;top:379px;width:214px;height:153.5px;background:#2d2d2d"></div>
 <div class="lrow" style="top:379px"></div>
 <div class="lrow" style="top:407px;height:28.5px"></div>
 <div class="a" style="left:214px;top:379px;width:18px;height:154px;background:#f0f0f0"></div>
 <div class="a thumb" style="left:216px;top:393.5px;width:13px;height:14px"></div>
 <div class="a" style="left:0;top:570px;width:232px;height:7px;background:linear-gradient(#fff 0,#fff 2.5px,#f6f6f6 3px)"></div>
</div>
<svg width="863" height="607" viewBox="0 0 863 607">
 <defs>
  <linearGradient id="fo" x1="0" y1="0" x2="0" y2="1"><stop offset="0" stop-color="#f6e8b0"/><stop offset="1" stop-color="#e0c46c"/></linearGradient>
  <linearGradient id="lk" x1="0" y1="0" x2="0" y2="1"><stop offset="0" stop-color="#f0c050"/><stop offset="1" stop-color="#c98a1c"/></linearGradient>
 </defs>
 <!-- dropdown chevrons -->
 <g fill="none" stroke="#444" stroke-width="1.5">
  <path d="M755.8 36.8l3.2 3.2 3.2-3.2"/>
  <path d="M755.8 64l3.2 3.2 3.2-3.2"/>
  <path d="M755.8 89.8l3.2 3.2 3.2-3.2"/>
 </g>
 <!-- check -->
 <path d="M602 139.8l2.6 3 4.2-6.3" fill="none" stroke="#111" stroke-width="1.7"/>
 <!-- spinner arrows -->
 <g fill="#111">
  <path d="M732 164h4.4l-2.2-2.8zM732 169.8h4.4l-2.2 2.8z"/>
  <path d="M732 193h4.4l-2.2-2.8zM732 198.8h4.4l-2.2 2.8z"/>
 </g>
 <!-- scroll arrows -->
 <g fill="none" stroke="#555" stroke-width="1.6">
  <path d="M803.3 29.8l3.4-3.4 3.4 3.4"/>
  <path d="M803.3 322.8l3.4 3.4 3.4-3.4"/>
  <path d="M802.6 389l3.4-3.4 3.4 3.4"/>
  <path d="M802.6 523.5l3.4 3.4 3.4-3.4"/>
 </g>
 <!-- layers header icons -->
 <g transform="translate(590.7 368) scale(.88)">
   <path d="M-6.8 0c2-3.2 4.4-4.2 6.8-4.2s4.8 1 6.8 4.2c-2 3-4.4 3.8-6.8 3.8s-4.8-.8-6.8-3.8z" fill="#fff" stroke="#2a2a2a" stroke-width="1"/>
   <circle cx="0" cy="-.2" r="3.1" fill="#2d9be6"/>
   <circle cx="0" cy="-.2" r="1.4" fill="#0a2a4a"/>
   <circle cx="-1" cy="-1.2" r=".8" fill="#fff"/>
 </g>
 <path d="M602.3 366.5v-1.8c0-3.2 5-3.2 5 0v.8" fill="none" stroke="#444" stroke-width="1.3"/>
 <rect x="600.3" y="366.8" width="9" height="8" rx="1" fill="url(#lk)" stroke="#6a4a0a" stroke-width=".8"/>
 <path d="M604.8 369.3v3" stroke="#3a2a05" stroke-width="1.4"/>
 <path d="M793.6 366.2h3l-1.5 2z" fill="#3f3f3f"/>
 <path d="M798.7 365.5h7M798.7 367.9h7M798.7 370.3h7" stroke="#4a4a4a" stroke-width="1.1"/>
 <!-- row items -->
 <g>
  <rect x="584" y="379" width="48" height="27" fill="#d2d2d2"/>
  <path d="M584.5 406v-26.5h47" fill="none" stroke="#f2f2f2" stroke-width="1"/>
  <rect x="632" y="379" width="2" height="56.5" fill="#0c0c0c"/>
  <g transform="translate(594.2 392.8)">
   <path d="M-6.8 0c2-3.2 4.4-4.2 6.8-4.2s4.8 1 6.8 4.2c-2 3-4.4 3.8-6.8 3.8s-4.8-.8-6.8-3.8z" fill="#fff" stroke="#2a2a2a" stroke-width="1"/>
   <circle cx="0" cy="-.2" r="3.1" fill="#2d9be6"/>
   <circle cx="0" cy="-.2" r="1.4" fill="#0a2a4a"/>
   <circle cx="-1" cy="-1.2" r=".8" fill="#fff"/>
 </g>
  <circle cx="608.3" cy="393" r=".9" fill="#111"/>
  <rect x="619.2" y="382.8" width="7" height="20.5" fill="#f0573e" stroke="#3a3a3a" stroke-width="1"/>
  <g transform="translate(637 382)">
   <rect x="0" y="0" width="22.5" height="22.5" fill="#fff" stroke="#a8a8a8" stroke-width="1.2"/>
   <path d="M8 3.5l2-.8c1 .8 2.5.8 3.5 0l2 .8-.5 4.5.5 11h-7.5l.5-11z" fill="none" stroke="#f6e4e2" stroke-width=".6"/>
 </g>
  <path d="M667 389.3v7.3l5.6-3.650z" fill="#757575"/>
  <g transform="translate(676.8 386.3)">
   <path d="M.5 2.5c0-1 .5-1.5 1.5-1.5h3.5l1.2 1.5h6c.8 0 1.2.5 1.2 1.2v8c0 .7-.5 1.2-1.2 1.2h-11c-.8 0-1.2-.5-1.2-1.2z" fill="#5a4a1a" opacity=".55" transform="translate(.7 .7)"/>
   <path d="M.5 2.5c0-1 .5-1.5 1.5-1.5h3.5l1.2 1.5h6c.8 0 1.2.5 1.2 1.2v8c0 .7-.5 1.2-1.2 1.2h-11c-.8 0-1.2-.5-1.2-1.2z" fill="url(#fo)" stroke="#8a6a1a" stroke-width=".8"/>
   <text x="7.3" y="10.8" font-size="7.6" font-weight="bold" text-anchor="middle" fill="#1a1a1a">G</text>
 </g>
  <text x="695.6" y="396.4" font-size="9.1" fill="#1e1e1e">T-Shirt Back (1)</text>
 </g>
 <g>
  <rect x="584" y="407" width="48" height="28" fill="#d2d2d2"/>
  <path d="M584.5 434v-26.5h47" fill="none" stroke="#f2f2f2" stroke-width="1"/>
  <g transform="translate(594.2 421)">
   <path d="M-6.8 0c2-3.2 4.4-4.2 6.8-4.2s4.8 1 6.8 4.2c-2 3-4.4 3.8-6.8 3.8s-4.8-.8-6.8-3.8z" fill="#fff" stroke="#2a2a2a" stroke-width="1"/>
   <circle cx="0" cy="-.2" r="3.1" fill="#2d9be6"/>
   <circle cx="0" cy="-.2" r="1.4" fill="#0a2a4a"/>
   <circle cx="-1" cy="-1.2" r=".8" fill="#fff"/>
 </g>
  <circle cx="608.3" cy="421.2" r=".9" fill="#111"/>
  <rect x="619.2" y="411" width="7" height="20.5" fill="#0bd419" stroke="#3a3a3a" stroke-width="1"/>
  <g transform="translate(637 410.3)">
   <rect x="0" y="0" width="22.5" height="22.5" fill="#fff" stroke="#a8a8a8" stroke-width="1.2"/>
   <path d="M8 3.5l2-.8c1 .8 2.5.8 3.5 0l2 .8-.5 4.5.5 11h-7.5l.5-11z" fill="none" stroke="#f6e4e2" stroke-width=".6"/>
 </g>
  <path d="M667 417.5v7.3l5.6-3.650z" fill="#757575"/>
  <g transform="translate(676.8 414.6)">
   <path d="M.5 2.5c0-1 .5-1.5 1.5-1.5h3.5l1.2 1.5h6c.8 0 1.2.5 1.2 1.2v8c0 .7-.5 1.2-1.2 1.2h-11c-.8 0-1.2-.5-1.2-1.2z" fill="#5a4a1a" opacity=".55" transform="translate(.7 .7)"/>
   <path d="M.5 2.5c0-1 .5-1.5 1.5-1.5h3.5l1.2 1.5h6c.8 0 1.2.5 1.2 1.2v8c0 .7-.5 1.2-1.2 1.2h-11c-.8 0-1.2-.5-1.2-1.2z" fill="url(#fo)" stroke="#8a6a1a" stroke-width=".8"/>
   <text x="7.3" y="10.8" font-size="7.6" font-weight="bold" text-anchor="middle" fill="#1a1a1a">G</text>
 </g>
  <text x="695.6" y="424.6" font-size="9.1" fill="#1e1e1e">T-Shirt Back</text>
 </g>
 <!-- bottom icons -->
 <g>
  <path d="M598.8 548.5h3.5l1 1.2h4.5v7.3h-9z" fill="#f0dfa0" stroke="#7a6420" stroke-width=".9"/>
  <path d="M596 552.5h5M598.5 550v5" stroke="#1a8a1a" stroke-width="1.5"/>
 </g>
 <g>
  <path d="M624.8 549.8h7l-.6 8h-5.8z" fill="#9aa4ad" stroke="#3c4650" stroke-width=".9"/>
  <path d="M623.8 548.8h9M626.8 548.5v-1.3h3v1.3" fill="none" stroke="#3c4650" stroke-width="1"/>
  <path d="M627 551.5v5M629.6 551.5v5" stroke="#3c4650" stroke-width=".8"/>
 </g>
</svg>
<div class="a" id="strip"></div>
<div class="a" style="left:816px;top:332px;width:40px;height:7px;background:linear-gradient(#c5bca6 0,#c5bca6 1px,#f4f2ee 1px,#f4f2ee 2.6px,#bdb59c 3px,#bdb59c 6px,#8a867a 6px)"></div>
<div class="a" style="left:816px;top:570px;width:40px;height:7px;background:linear-gradient(#f0eee8 0,#f0eee8 2.6px,#bfb99a 3px)"></div>
<svg width="863" height="607" viewBox="0 0 863 607">
 <defs>
  <linearGradient id="pg" x1="0" y1="0" x2="0" y2="1"><stop offset="0" stop-color="#e6e6e6"/><stop offset="1" stop-color="#fff"/></linearGradient>
  <radialGradient id="hp" cx=".4" cy=".3" r=".8"><stop offset="0" stop-color="#f6b93a"/><stop offset=".7" stop-color="#e69a14"/><stop offset="1" stop-color="#b9740a"/></radialGradient>
 </defs>
 <!-- active tab doc -->
 <path d="M816.5 21.5h29.5l2.5 2.5v27l-2.5 2.5h-29.5z" fill="#ecebe1" stroke="#f7f6f0" stroke-width="1"/>
 <path d="M846 21.5l2.5 2.5v27l-2.5 2.5" fill="none" stroke="#bcb8a8" stroke-width="1"/>
 <path d="M816.5 54h29.5" stroke="#a9a594" stroke-width="1"/>
 <path d="M823.8 25.8h12.8l6 6v17.7h-18.8z" fill="#8a8a8a" opacity=".55"/>
 <path d="M822.8 24.8h13l5.8 5.8v18.2h-18.8z" fill="url(#pg)" stroke="#777" stroke-width="1.3" stroke-linejoin="round"/>
 <path d="M835.8 24.8v5.8h5.8" fill="#f4f4f4" stroke="#777" stroke-width="1.2" stroke-linejoin="round"/>
 <!-- move -->
 <g fill="#1a1a1a">
  <path d="M832 60.8l5 6h-3.3v5h5v-3.3l6 5-6 5v-3.3h-5v5h3.3l-5 6-5-6h3.3v-5h-5v3.3l-6-5 6-5v3.3h5v-5h-3.3z"/>
 </g>
 <!-- palette -->
 <path d="M819.2 108c0-6 6-10.5 13.5-10.5c7 0 12 4.5 12 10c0 4-3 5-5.5 5.5c-2 .5-1.5 3-.5 5c1.2 2.5-1 4.5-4.5 4.5c-8 0-15-6-15-14.5z" fill="#eedcae" stroke="#8a5a2a" stroke-width="1.2"/>
 <ellipse cx="832" cy="116.6" rx="2.4" ry="1.7" fill="#9a7a55" stroke="#5a3a1a" stroke-width="1"/>
 <circle cx="828.2" cy="102" r="2.2" fill="#d8352c"/>
 <ellipse cx="834.8" cy="103.3" rx="2.4" ry="1.5" fill="#f0a31c"/>
 <circle cx="838.8" cy="108.8" r="2.1" fill="#69b33a"/>
 <circle cx="823.4" cy="106.8" r="2.1" fill="#8a4fb0"/>
 <circle cx="825.9" cy="112.7" r="2.1" fill="#3f8fe0"/>
 <!-- wrench -->
 <g transform="rotate(-42 832 149)">
  <path d="M818.5 147.3h17.5c1-2.5 3.5-4 6.5-3.5l-3 3.2 1 2.8 3 .5 2.5-2.8c.8 3.5-2 6.5-5.5 6.2c-2.2-.2-3.8-1.5-4.5-3h-17.5c-2.3 0-2.3-3.4 0-3.4z" fill="#a9a9a9" stroke="#4a4a4a" stroke-width="1.1" stroke-linejoin="round"/>
  <path d="M819 148.3h16" stroke="#e2e2e2" stroke-width="1"/>
 </g>
 <!-- AA -->
 <rect x="819.5" y="174" width="26" height="25.5" rx="2.5" fill="#777" opacity=".5"/>
 <rect x="818.9" y="173.2" width="26" height="25.5" rx="2.5" fill="#fdfdfd" stroke="#e4e4e4" stroke-width=".8"/>
 <path d="M820.5 182.8l4.1-6.4 4.1 6.4z" fill="#3a3a3a"/>
 <text x="820.3" y="194.7" font-size="12.3" fill="#111">A</text>
 <text x="830" y="194.7" font-size="21.6" fill="#111" textLength="13" lengthAdjust="spacingAndGlyphs">A</text>
 <!-- layers tab -->
 <path d="M816.5 360.5h29.5l2.5 2.5v26.5l-2.5 2.5h-29.5z" fill="#ecebe1" stroke="#f7f6f0" stroke-width="1"/>
 <path d="M846 360.5l2.5 2.5v26.5l-2.5 2.5" fill="none" stroke="#bcb8a8" stroke-width="1"/>
 <path d="M816.5 392.6h29.5" stroke="#a9a594" stroke-width="1"/>
 <g fill="#fff" stroke="#2e2e2e" stroke-width="1.4" stroke-linejoin="round">
  <path d="M831.5 373.5l13 6.3-13 6.3-13-6.3z"/>
  <path d="M831.5 369.5l13 6.3-13 6.3-13-6.3z"/>
  <path d="M831.5 365.3l13 6.3-13 6.3-13-6.3z"/>
 </g>
 <!-- help -->
 <circle cx="832" cy="413.2" r="11.8" fill="#6b5a3a" opacity=".45"/>
 <circle cx="831.5" cy="412.3" r="11.6" fill="url(#hp)" stroke="#b17410" stroke-width=".8"/>
 <text x="831.3" y="418.8" font-size="18" font-weight="bold" fill="#fff" text-anchor="middle">?</text>
</svg>
<div class="a" id="status"></div>
<div class="a" style="left:4px;top:582px;width:41px;height:17px;background:#fff;font-size:10px;line-height:17px;padding-left:4.5px;color:#111">42%</div>
<div class="a" style="left:45px;top:582px;width:15.8px;height:17px;background:#e4e4e4"></div>
<div class="a" style="left:96.2px;top:584.5px;font-size:10px;line-height:12px;color:#151515;white-space:nowrap">9.25, 6.50</div>
<div class="a" style="left:213px;top:584.5px;font-size:10px;line-height:12px;color:#151515;white-space:nowrap">Rotate (0.23)</div>
<svg width="863" height="607" viewBox="0 0 863 607"><path d="M51 588.8l3.4 3.4 3.4-3.4" fill="none" stroke="#444" stroke-width="1.6"/></svg>
<div class="a" id="bottom"></div>
<div class="a" style="left:31px;top:604px;width:51px;height:3px;background:#d9d19c"></div>
<div class="a" style="left:359px;top:604px;width:52px;height:3px;background:#d9d19c"></div>
<div class="a" id="yellow"></div>
<div class="a" style="left:854px;top:604px;width:9px;height:3px;background:#d6cf98"></div>
<!-- top edge lines -->
<div class="a" style="left:0;top:0;width:584px;height:1px;background:#b2b2b2"></div>
<div class="a" style="left:584px;top:0;width:272px;height:1px;background:#d8d8d8"></div>
<div class="a" style="left:0;top:1px;width:30px;height:1px;background:#1a1a1a"></div>
<div class="a" style="left:816px;top:1px;width:40px;height:1px;background:#111"></div>
</body></html>
